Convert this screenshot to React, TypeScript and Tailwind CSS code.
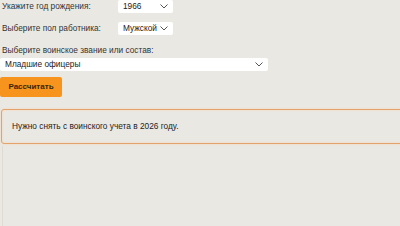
import type { ReactNode } from 'react'

function Chevron() {
  return (
    <svg width="8" height="5" viewBox="0 0 8 5" fill="none" stroke="#555" strokeWidth="1">
      <path d="M0.5 0.5 4 4 7.5 0.5" />
    </svg>
  )
}

function FakeSelect({ value, className }: { value: string; className: string }) {
  return (
    <div
      className={`flex items-center justify-between rounded-[2px] bg-white pl-[5px] pr-[5px] text-[8.3px] text-[#222] ${className}`}
    >
      <span>{value}</span>
      <Chevron />
    </div>
  )
}

function Row({ children }: { children: ReactNode }) {
  return <div className="flex items-center">{children}</div>
}

export default function App() {
  return (
    <div
      className="h-[226px] w-[400px] overflow-hidden bg-[#eae8e3] text-[8.3px] text-[#333]"
      style={{ fontFamily: '"Liberation Sans", Arial, sans-serif' }}
    >
      <div className="flex flex-col pl-[2px]">
        <Row>
          <span className="w-[116px]">Укажите год рождения:</span>
          <FakeSelect value="1966" className="h-[13px] w-[55px]" />
        </Row>
        <div className="mt-[9px]">
          <Row>
            <span className="w-[116px]">Выберите пол работника:</span>
            <FakeSelect value="Мужской" className="h-[13px] w-[55px]" />
          </Row>
        </div>
        <div className="mt-[10px] leading-[11px]">Выберите воинское звание или состав:</div>
      </div>
      <FakeSelect value="Младшие офицеры" className="mt-[2px] h-[13px] w-[268px]" />
      <button
        type="button"
        className="mt-[6px] flex h-[20px] w-[62px] items-center justify-center rounded-[2px] bg-[#f7941d] text-[8px] font-bold text-[#3b2408]"
      >
        Рассчитать
      </button>
      <div className="ml-[1px] mt-[12px] flex h-[35px] w-[420px] items-center rounded-[3px] border border-[#e2a46c] pl-[10px] text-[8.3px] text-[#222] shadow-[inset_0_0_2px_#f6d2ad,0_0_2px_#f6d2ad]">
        Нужно снять с воинского учета в 2026 году.
      </div>
      <div className="ml-[2px] mt-[2px] h-[100px] border-l border-[#dedbd5]" />
    </div>
  )
}
